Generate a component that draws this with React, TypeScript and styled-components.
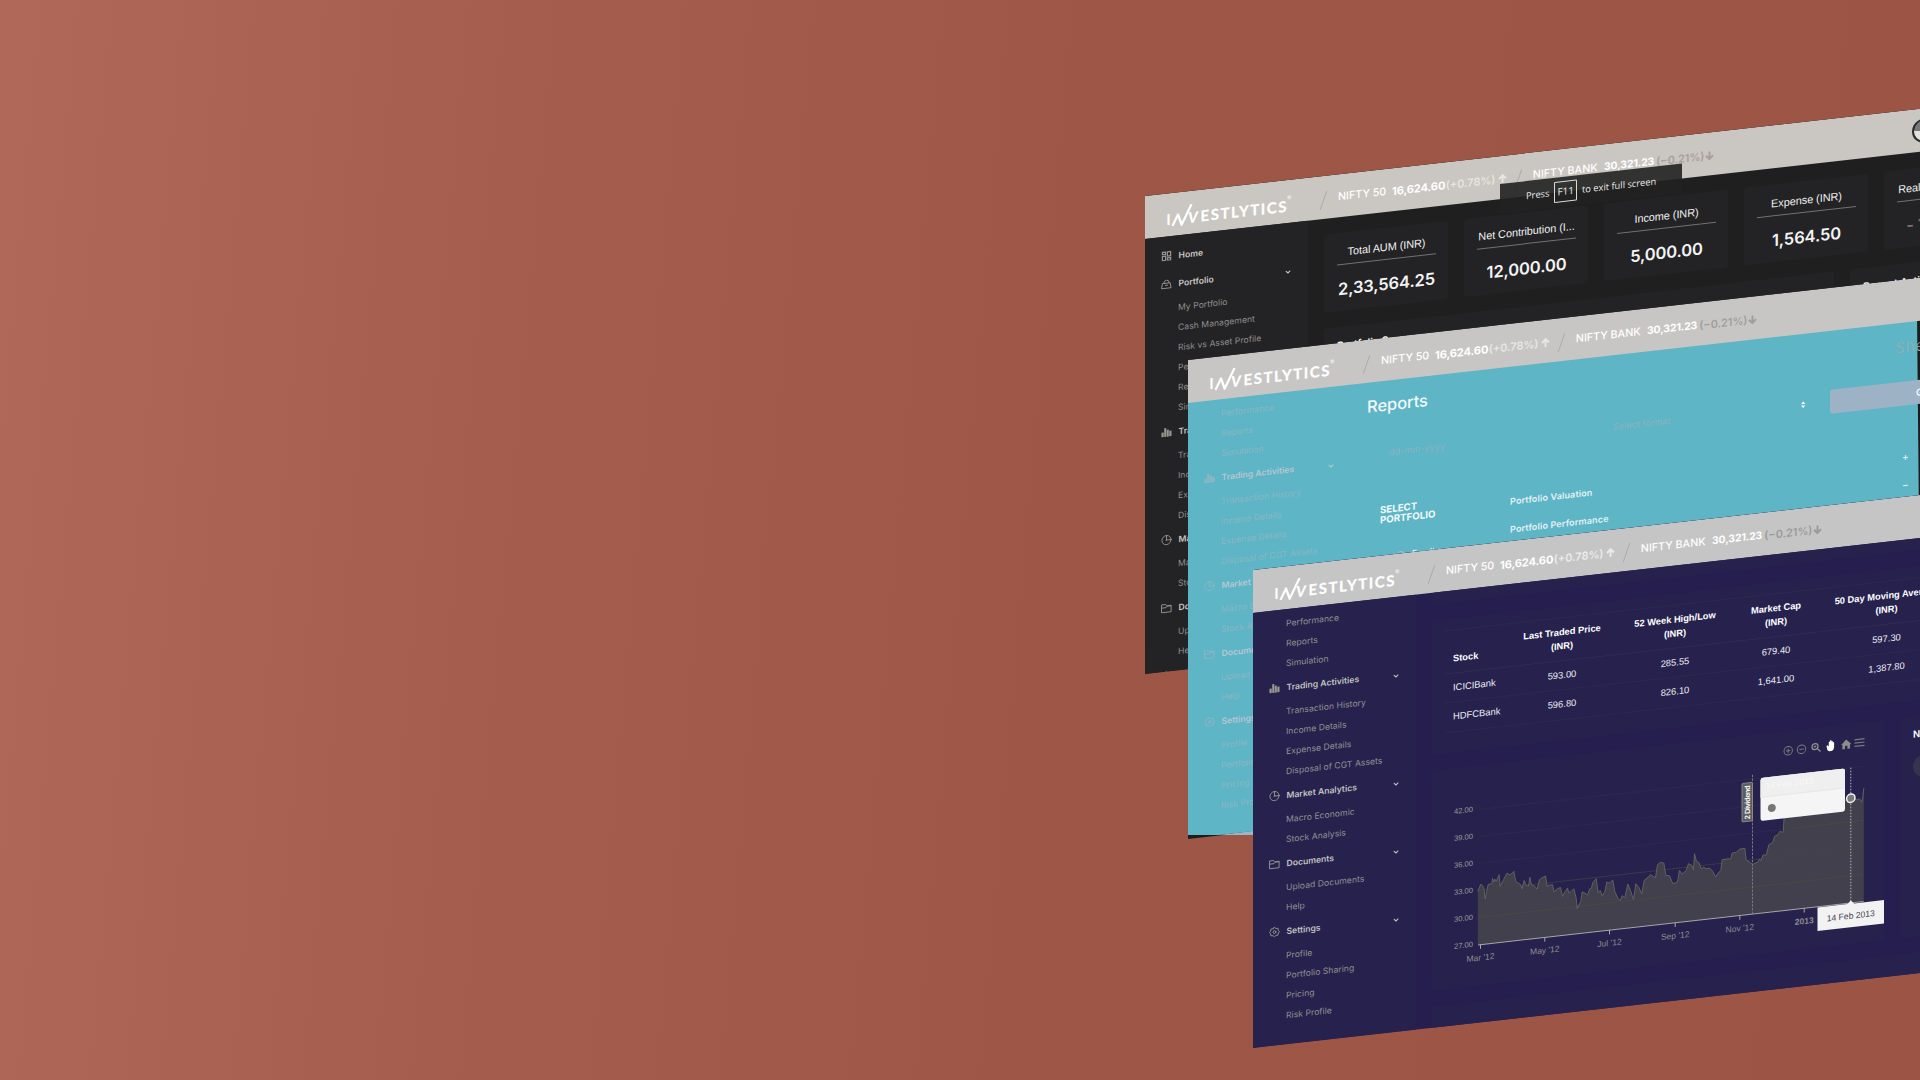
import React from 'react';
import styled, { createGlobalStyle, css } from 'styled-components';

const SLOPE = 0.1125;

type Tone = {
  header: string;
  side: string;
  body: string;
  card: string;
  group: string;
  link: string;
  icon: string;
  up: string;
  down: string;
  slash: string;
};

const dark: Tone = {
  header: '#cac6c1', side: '#232325', body: '#1f1f20', card: '#232325',
  group: '#cbc6c1', link: '#918e8b', icon: '#98948f',
  up: '#e3e7de', down: '#a99f9b', slash: '#aeaaa6',
};
const cyan: Tone = {
  header: '#c8c6c5', side: 'transparent', body: 'transparent', card: 'transparent',
  group: '#b9c6d0', link: '#8cb5c4', icon: '#8fb6c5',
  up: '#e4e8e3', down: '#a19e9d', slash: '#aeacab',
};
const navy: Tone = {
  header: '#c5c5c5', side: '#26224d', body: '#261e4f', card: '#26224d',
  group: '#c3c2c1', link: '#92908f', icon: '#98968f',
  up: '#ebebeb', down: '#9b9b9b', slash: '#ababab',
};

const Global = createGlobalStyle`
  html, body { margin: 0; padding: 0; background: #9d5546; }
  * { box-sizing: border-box; }
`;

const Scene = styled.main`
  position: relative;
  width: 1920px;
  height: 1080px;
  overflow: hidden;
  background: linear-gradient(95deg, #b06858 0%, #a55d4d 26%, #9e5646 56%, #9c5444 100%);
  font-family: Inter, 'Liberation Sans', sans-serif;
  white-space: nowrap;
`;

const Window = styled.section<{ $x: number; $y: number; $tone: Tone }>`
  position: absolute;
  left: ${p => p.$x}px;
  top: ${p => p.$y}px;
  width: 900px;
  height: 478px;
  display: flex;
  flex-direction: column;
  overflow: hidden;
  transform-origin: 0 0;
  transform: matrix(1, -${SLOPE}, 0, 1, 0, 0);
  background: ${p => p.$tone.body};
`;

const Backing = styled.div`
  position: absolute;
  left: 1188.3px;
  top: 360.5px;
  width: 900px;
  height: 478px;
  transform-origin: 0 0;
  transform: matrix(1, -${SLOPE}, 0, 1, 0, 0);
  background: #1c1c1d;
`;

const Wash = styled.div<{ $color: string; $clip: string }>`
  position: absolute;
  inset: 0;
  background: ${p => p.$color};
  clip-path: polygon(${p => p.$clip});
`;

const Header = styled.header<{ $tone: Tone }>`
  flex: none;
  height: 43px;
  display: flex;
  align-items: center;
  padding-left: 18px;
  background: ${p => p.$tone.header};
  color: #fff;
`;

const LogoArt = styled.svg`
  flex: none;
  width: 157px;
  height: 43px;
  overflow: visible;
`;

const Slash = styled.i<{ $tone: Tone; $left?: number }>`
  flex: none;
  width: 1px;
  height: 19px;
  margin: 6px 14px 0 ${p => p.$left ?? 3}px;
  transform: rotate(20deg);
  background: ${p => p.$tone.slash};
`;

const Name = styled.span<{ $w: number }>`
  flex: none;
  width: ${p => p.$w}px;
  font-size: 10.7px;
  font-weight: 500;
`;
const Quote = styled.b<{ $w: number; $size?: number }>`
  flex: none;
  width: ${p => p.$w}px;
  font-size: ${p => p.$size ?? 11.1}px;
  font-weight: 700;
  letter-spacing: -0.1px;
`;
const Change = styled.span<{ $w: number; $c: string }>`
  flex: none;
  width: ${p => p.$w}px;
  font-size: 10.9px;
  font-weight: 600;
  color: ${p => p.$c};
`;
const TickerRow = styled.div`
  display: flex;
  align-items: center;
  height: 43px;
  padding-top: 2px;
`;
const ArrowIcon = styled.svg<{ $flip?: boolean }>`
  width: 9px;
  height: 10px;
  ${p => p.$flip && css`transform: rotate(180deg);`}
`;
const Avatar = styled.div`
  flex: none;
  width: 24px;
  height: 24px;
  margin-left: 198px;
  border-radius: 50%;
  border: 2px solid #2d2d2e;
  background: linear-gradient(#77787a 50%, #e4e2df 50%);
`;

const Body = styled.div`
  flex: 1;
  min-height: 0;
  display: flex;
`;
const Side = styled.nav<{ $tone: Tone; $scrolled: boolean }>`
  flex: none;
  width: 163px;
  overflow: hidden;
  background: ${p => p.$tone.side};
  & > div { margin-top: ${p => (p.$scrolled ? -112.5 : 5.5)}px; }
`;
const GroupRow = styled.div<{ $tone: Tone }>`
  display: flex;
  align-items: center;
  height: 28px;
  padding: 0 17.5px 0 16px;
  font-size: 8.6px;
  font-weight: 600;
  color: ${p => p.$tone.group};
  & > svg { color: ${p => p.$tone.icon}; flex: none; }
  & > span { flex: 1; margin-left: 6.5px; }
  & > svg + span + svg { color: ${p => p.$tone.group}; margin-top: 2px; }
`;
const LinkRow = styled.div<{ $tone: Tone }>`
  display: flex;
  align-items: center;
  height: 20px;
  padding-left: 33px;
  font-size: 8.6px;
  letter-spacing: 0.04px;
  color: ${p => p.$tone.link};
`;

const Content = styled.div`
  flex: 1;
  min-width: 0;
  display: flex;
  flex-direction: column;
  gap: 16px;
  padding: 16px 0 0 16px;
`;
const Row = styled.div`
  display: flex;
  gap: 16px;
`;
const Card = styled.div<{ $tone: Tone; $w?: number; $h: number }>`
  flex: none;
  width: ${p => (p.$w ? `${p.$w}px` : 'auto')};
  height: ${p => p.$h}px;
  border-radius: 3px;
  background: ${p => p.$tone.card};
`;
const StatCard = styled(Card)`
  display: flex;
  flex-direction: column;
  align-items: center;
  padding: 12px 12px 0 13px;
`;
const StatTitle = styled.div`
  width: 100%;
  height: 20px;
  text-align: center;
  border-bottom: 1px solid #75716d;
  font: 10.9px/15px 'Liberation Sans', sans-serif;
  letter-spacing: -0.05px;
  color: #f1f1f1;
`;
const StatValue = styled.div<{ $muted?: boolean }>`
  margin-top: 14px;
  font-size: 16.5px;
  line-height: 20px;
  font-weight: 600;
  letter-spacing: -0.1px;
  color: ${p => (p.$muted ? '#80706c' : '#f3f3f3')};
`;
const PanelTitle = styled.h3`
  margin: 0;
  padding: 11px 13px;
  font-size: 10.3px;
  line-height: 15px;
  font-weight: 600;
  color: #f1f1f1;
`;
const Toast = styled.div`
  position: absolute;
  left: 355px;
  top: 27.5px;
  width: 181.5px;
  height: 30.5px;
  display: flex;
  align-items: center;
  gap: 4.5px;
  padding-left: 26px;
  background: rgba(33, 33, 33, 0.9);
  font: 9.3px 'Open Sans', 'Noto Sans', sans-serif;
  color: #ececec;
`;
const Key = styled.kbd`
  width: 23.5px;
  height: 21px;
  text-align: center;
  border: 1px solid #dadada;
  border-radius: 1px;
  font: inherit;
  font-size: 10px;
  line-height: 19px;
`;

const ReportBody = styled.div`
  flex: 1;
  display: flex;
  flex-direction: column;
  padding-left: 16px;
  color: #f4fafb;
`;
const ReportHead = styled.div`
  display: flex;
  height: 50px;
  padding-bottom: 2px;
  align-items: center;
`;
const ReportTitle = styled.h2`
  flex: none;
  margin: 0;
  width: 528px;
  font-size: 16.4px;
  font-weight: 500;
`;
const Faded = styled.span`
  font-size: 15.5px;
  font-weight: 300;
  letter-spacing: 0.8px;
  color: #96adb2;
`;
const FilterRow = styled.div`
  display: flex;
  align-items: center;
  height: 42px;
`;
const Field = styled.div<{ $w: number; $pad: number }>`
  width: ${p => p.$w}px;
  padding-left: ${p => p.$pad}px;
  font-size: 9.1px;
  font-weight: 400;
  color: #8db3c1;
`;
const Action = styled.button`
  width: 180px;
  height: 24px;
  margin: 0;
  padding: 0 0 0 86px;
  border: 0;
  border-radius: 3px;
  text-align: left;
  background: #9db3c5;
  color: #f4f7fa;
  font: 600 9.5px Inter, sans-serif;
`;
const ReportGrid = styled.div`
  display: flex;
  padding: 28px 0 0 13px;
  font-size: 9px;
`;
const Choose = styled.div`
  width: 130px;
  line-height: 10.4px;
  padding-top: 4px;
  font-size: 9.7px;
  font-weight: 700;
`;
const Option = styled.div`
  display: flex;
  align-items: center;
  height: 28px;
  width: 404px;
  justify-content: space-between;
  font-weight: 600;
  letter-spacing: 0.14px;
  color: #e6f1f4;
  b { width: 12px; font-size: 10px; font-weight: 500; }
`;
const RadioLine = styled.div`
  display: flex;
  align-items: center;
  gap: 8px;
  padding: 25px 0 0 17px;
  i { width: 7px; height: 7px; border: 1px solid #9fc0cc; border-radius: 50%; }
`;

const Table = styled.table`
  margin: 11px 0 0 13px;
  width: 720px;
  border-collapse: collapse;
  table-layout: fixed;
  font-family: 'Liberation Sans', sans-serif;
  color: #eeedf2;
`;
const Th = styled.th<{ $w: number; $left?: boolean }>`
  width: ${p => p.$w}px;
  height: 43px;
  padding: ${p => (p.$left ? '13px 0 0 8px' : '0 1px 0 0')};
  text-align: ${p => (p.$left ? 'left' : 'center')};
  border-top: 1px solid #2b2a51;
  border-bottom: 1px solid #2e2c50;
  font-size: 9.3px;
  line-height: 14px;
  color: #fff;
`;
const Td = styled.td<{ $left?: boolean }>`
  height: 29.3px;
  padding: ${p => (p.$left ? '0 0 2px 8px' : '0 1px 1px 0')};
  text-align: ${p => (p.$left ? 'left' : 'center')};
  border-bottom: 1px solid #2b2a4f;
  font-size: 9.4px;
`;
const ChartArt = styled.svg`
  display: block;
  overflow: visible;
  font-family: 'Liberation Sans', sans-serif;
`;
const SideCard = styled(Card)`
  padding: 12px 13px;
  color: #fff;
  font-size: 9.5px;
  font-weight: 600;
  i { display: block; width: 22px; height: 22px; margin-top: 16px; border-radius: 50%; background: #36334f; }
`;
const FlushTop = styled.div`
  display: flex;
  flex-direction: column;
  gap: 16px;
  margin-top: -16px;
`;

const strokeProps = { fill: 'none', stroke: 'currentColor', strokeWidth: 2, strokeLinejoin: 'round' as const, strokeLinecap: 'round' as const };

const icons: Record<string, React.ReactNode> = {
  home: <g {...strokeProps} strokeWidth={2.6} strokeLinejoin="miter"><path d="M3 3h7v5H3zM14 3h7v9h-7zM3 12h7v9H3zM14 16h7v5h-7z" /></g>,
  bag: <g {...strokeProps}><path d="M4 10h16l2 11H2zM6 10a6 6.500 0 0 1 12 0M9.500 14.500h5" /></g>,
  bars: <path fill="currentColor" d="M1 12h5v10H1zM7 3h4.500v19H7zM12.500 7h4.500v15h-4.500zM18 10h5v12h-5z" />,
  pie: <g {...strokeProps}><circle cx="12" cy="12" r="10" /><path d="M12 2v10h10M12 12l-1 1" /></g>,
  folder: <g {...strokeProps}><path d="M2 4h8l2 3h10v14H2zM2 11h9l3-3h8" /></g>,
  gear: <g {...strokeProps}><path d="M12 1.500l3 3h4.500l1 4.500 2 3-2 3-1 4.500H15l-3 3-3-3H4.500l-1-4.500-2-3 2-3 1-4.500H9z" /><circle cx="12" cy="12" r="3" /></g>,
};

const Icon = ({ name }: { name: string }) => (
  <svg width="11" height="11" viewBox="0 0 24 24">{icons[name]}</svg>
);
const Chevron = () => (
  <svg width="6" height="6" viewBox="0 0 6 6"><path d="M.8 2l2.200 2L5.200 2" fill="none" stroke="currentColor" strokeWidth="1.100" /></svg>
);

const menu: { title: string; icon: string; items: string[] }[] = [
  { title: 'Home', icon: 'home', items: [] },
  { title: 'Portfolio', icon: 'bag', items: ['My Portfolio', 'Cash Management', 'Risk vs Asset Profile', 'Performance', 'Reports', 'Simulation'] },
  { title: 'Trading Activities', icon: 'bars', items: ['Transaction History', 'Income Details', 'Expense Details', 'Disposal of CGT Assets'] },
  { title: 'Market Analytics', icon: 'pie', items: ['Macro Economic', 'Stock Analysis'] },
  { title: 'Documents', icon: 'folder', items: ['Upload Documents', 'Help'] },
  { title: 'Settings', icon: 'gear', items: ['Profile', 'Portfolio Sharing', 'Pricing', 'Risk Profile'] },
];

const Sidebar = ({ tone, scrolled = true }: { tone: Tone; scrolled?: boolean }) => (
  <Side $tone={tone} $scrolled={scrolled}>
    <div>
      {menu.map(g => (
        <React.Fragment key={g.title}>
          <GroupRow $tone={tone}>
            <Icon name={g.icon} />
            <span>{g.title}</span>
            {g.items.length > 0 && <Chevron />}
          </GroupRow>
          {g.items.map(i => <LinkRow $tone={tone} key={i}>{i}</LinkRow>)}
        </React.Fragment>
      ))}
    </div>
  </Side>
);

const Logo = () => (
  <LogoArt viewBox="18 0.6 157 43" fill="#fff" fontFamily="Lato, sans-serif" fontWeight="700">
    <text x="21.300" y="32.300" fontSize="15">I</text>
    <path d="M27.500 33.500L33 22.800l3.700 10.600L46.500 14" fill="none" stroke="#fff" strokeWidth="2.300" strokeLinejoin="round" />
    <text x="43" y="32.600" fontSize="15" fontStyle="italic" fontWeight="900">V</text>
    <text x="55.500" y="32.300" fontSize="15" textLength="86" lengthAdjust="spacing" stroke="#fff" strokeWidth=".25">ESTLYTICS</text>
    <text x="142" y="20" fontSize="5.500" opacity=".8">®</text>
  </LogoArt>
);

const Arrow = ({ color, flip }: { color: string; flip?: boolean }) => (
  <ArrowIcon $flip={flip} viewBox="0 0 9 10"><path d="M4.500 9V1.500M1 5l3.500-3.500L8 5" fill="none" stroke={color} strokeWidth="2" /></ArrowIcon>
);

const TopBar = ({ tone, avatar }: { tone: Tone; avatar?: boolean }) => (
  <Header $tone={tone}>
    <Logo />
    <Slash $tone={tone} />
    <TickerRow>
      <Name $w={54}>NIFTY 50</Name>
      <Quote $w={53.8}>16,624.60</Quote>
      <Change $w={52}  $c={tone.up}>(+0.78%)</Change>
      <Arrow color={tone.up} />
    </TickerRow>
    <Slash $tone={tone} $left={11} />
    <TickerRow>
      <Name $w={71.2}>NIFTY BANK</Name>
      <Quote $w={52.3} $size={10.4}>30,321.23</Quote>
      <Change $w={48.5} $c={tone.down}>(−0.21%)</Change>
      <Arrow color={tone.down} flip />
    </TickerRow>
    {avatar && <Avatar />}
  </Header>
);

const stats = [
  ['Total AUM (INR)', '2,33,564.25'],
  ['Net Contribution (I...', '12,000.00'],
  ['Income (INR)', '5,000.00'],
  ['Expense (INR)', '1,564.50'],
  ['Realised Gain (INR)', '- 1,245.00'],
];

const rows = [
  ['ICICIBank', '593.00', '285.55', '679.40', '597.30', ''],
  ['HDFCBank', '596.80', '826.10', '1,641.00', '1,387.80', ''],
];

/* Price samples in thirds of a pixel, measured along the tilted plane. */
const samples: number[][] = [
  [235,455],[239,445],[244,433],[253,443],[257,478],[266,434],[277,432],[279,416],[283,427],[286,418],[290,425],[299,405],[302,440],[312,420],[322,401],[333,405],[343,395],[349,426],[362,433],[368,447],[374,422],[380,437],[387,440],[391,413],[396,435],[405,439],[413,448],[420,420],[428,414],[438,409],[443,440],[450,436],[459,435],[464,457],[472,448],[483,443],[489,470],[497,455],[504,445],[508,460],[515,455],[523,447],[530,475],[533,507],[541,490],[544,485],[548,456],[556,460],[564,466],[571,447],[576,445],[580,428],[590,417],[596,460],[602,452],[608,468],[616,456],[622,427],[630,430],[640,421],[646,456],[655,475],[662,483],[668,468],[676,474],[685,433],[693,452],[702,480],[709,432],[718,443],
  [727,462],[734,422],[746,412],[753,405],[768,414],[774,375],[782,368],[793,370],[799,407],[810,408],[820,432],[834,427],[840,392],[848,403],[860,392],[867,372],[876,376],[882,390],[885,342],[891,365],[898,368],[906,388],[912,382],[920,387],[930,385],[940,395],[948,412],[956,400],[964,392],[968,360],[980,358],[994,357],[998,340],[1010,338],[1021,328],[1036,326],[1040,360],[1059,374],[1076,366],[1080,358],[1084,363],[1091,345],[1100,347],[1108,315],[1120,308],[1125,290],[1135,285],[1141,275],[1151,278],[1154,230],[1160,210],[1180,205],[1198,225],[1202,233],[1210,210],[1250,202],[1280,195],[1320,185],[1345,180],[1350,167],[1360,173],[1370,180],[1380,177],[1387,187],[1390,172],[1393,145],
];
/* Chart card origin inside the window is (179.5, 221). */
const line = samples
  .map(([x, y]) => `${(147 + x / 3 - 179.5).toFixed(2)},${(186.2 + y / 3 + 0.0375 * x - 221).toFixed(2)}`)
  .join(' ');

const months: [string, number][] = [["Mar '12", 48.5], ["May '12", 112.8], ["Jul '12", 177.5], ["Sep '12", 243.2], ["Nov '12", 307.8], ['2013', 372.2]];

const Chart = () => (
  <ChartArt width="452" height="220" viewBox="0 0 452 220">
    {[0, 1, 2, 3, 4].map(i => <path key={i} d={`M47 ${44 + i * 27}H431.500`} stroke="#2c2a50" />)}
    <polygon points={`${line} 431.8,179 45.800,179`} fill="#41404c" />
    {[2, 3, 4].map(i => <path key={i} d={`M${i === 2 ? 392 : 47} ${44 + i * 27}H431.500`} stroke="#494942" strokeOpacity={i === 3 ? 0.5 : 0.9} />)}
    <path d="M360 98H431.500" stroke="#494942" />
    <polyline points={line} fill="none" stroke="#66655f" strokeWidth=".9" />
    <path d="M46 179.300H431.500" stroke="#a8a7ab" />
    {months.map(([m, x]) => (
      <g key={m}>
        <path d={`M${x} 179v4.500`} stroke="#a8a7ab" />
        <text x={x} y="195" textAnchor="middle" fontSize="8.500" fontWeight={m === '2013' ? 700 : 400} fill="#8e8c8e">{m}</text>
      </g>
    ))}
    {[42, 39, 36, 33, 30, 27].map((v, i) => (
      <text key={v} x="41" y={45.6 + i * 27} textAnchor="end" fontSize="7.600" fill="#9c9a98">{v}.00</text>
    ))}

    <g fill="none" stroke="#7c7a7b" strokeWidth="1">
      <circle cx="356.200" cy="20" r="4.200" /><path d="M354 20h4.400M356.200 17.800v4.400" />
      <circle cx="369.500" cy="20" r="4.200" /><path d="M367.300 20h4.400" />
    </g>
    <g fill="none" stroke="#93918f" strokeWidth="1.200">
      <circle cx="383" cy="18.800" r="3" /><path d="M385.200 21l3.300 3.300" /><path d="M381.700 18.800h2.600M383 17.500v2.600" strokeWidth=".8" />
    </g>
    <path d="M394.500 19.500l1.300-.5 1 1.200v-4.500q.7-.9 1.300 0v-1.200q.7-.9 1.400 0v1q.7-.8 1.300 0v1.200q.8-.7 1.300.2v4.600q-.3 3.200-2.700 3.500h-2.200q-1.400-.4-2-2z" fill="#fff" />
    <path d="M409 20.300l5.200-5 5.200 5H418v4.400h-2.600v-3h-2.400v3h-2.600v-4.400z" fill="#8e8c89" />
    <path d="M422.500 16.500h10M422.500 19.800h10M422.500 23.100h10" stroke="#7c7a7b" strokeWidth="1.200" />

    <path d="M320.500 40V179" stroke="#77767a" strokeDasharray="2.500 1.200" />
    <rect x="310" y="47.500" width="10.500" height="38.500" rx="1" fill="#5d5c60" stroke="#96958f" strokeWidth=".8" />
    <text transform="translate(318 84) rotate(-90)" fontSize="7.600" fontWeight="700" fill="#f3f3f3" textLength="34">2 Dividend</text>

    <path d="M418.800 44V179" stroke="#b9b8bc" strokeDasharray="1.500 1.500" />
    <rect x="328.500" y="44" width="84.500" height="43" rx="2.500" fill="#f5f5f5" />
    <path d="M331 44h79.500q2.500 0 2.500 2.500V63.500H328.500V46.500q0-2.500 2.500-2.500z" fill="#efefef" />
    <path d="M328.500 63.500H413" stroke="#e4e4e4" strokeWidth=".8" />
    <text x="333.500" y="55.500" fontSize="8.600" fill="#f8f8f8">14 Feb 2013</text>
    <circle cx="339.800" cy="75.300" r="4" fill="#777" />
    <circle cx="418.800" cy="74.500" r="4.200" fill="#7a7a7a" stroke="#f2f2f2" strokeWidth="1.500" />
    <path d="M385.500 180h30l3.300-3.300 3.300 3.300H452v23.500h-66.500z" fill="#f2f2f3" />
    <text x="418.800" y="195" fontSize="8.600" textAnchor="middle" fill="#45444f">14 Feb 2013</text>
  </ChartArt>
);

const Dashboard = () => (
  <Window $x={1145.3} $y={196.3} $tone={dark}>
    <TopBar tone={dark} avatar />
    <Body>
      <Sidebar tone={dark} scrolled={false} />
      <Content>
        <Row>
          {stats.map(([t, v], i) => (
            <StatCard key={t} $tone={dark} $w={124} $h={78}>
              <StatTitle>{t}</StatTitle>
              <StatValue $muted={i === 4}>{v}</StatValue>
            </StatCard>
          ))}
        </Row>
        <Row>
          <Card $tone={dark} $w={510} $h={300}><PanelTitle>Portfolio Summary</PanelTitle></Card>
          <Card $tone={dark} $w={300} $h={300}><PanelTitle>Recent Activities</PanelTitle></Card>
        </Row>
      </Content>
    </Body>
    <Toast>Press <Key>F11</Key> to exit full screen</Toast>
  </Window>
);

const Reports = () => (
  <>
    <Backing />
    <Wash $color="#9fb4c6" $clip="1219px 835px, 1256px 830.5px, 1256px 835px" />
    <Wash $color="#5db5c6" $clip="1188px 398px, 1917px 314px, 1919px 520px, 1919px 756px, 1219px 835px, 1188px 835px" />
    <Window $x={1188.3} $y={360.3} $tone={cyan}>
      <TopBar tone={cyan} />
      <Body>
        <Sidebar tone={cyan} />
        <ReportBody>
          <ReportHead><ReportTitle>Reports</ReportTitle><Faded>She</Faded></ReportHead>
          <FilterRow>
            <Field $w={224} $pad={22}>dd-mm-yyyy</Field>
            <Field $w={209} $pad={22}>Select format</Field>
            <svg width="30" height="8" viewBox="0 0 30 8"><path d="M1 3.300L3.200.8l2.200 2.500zM1 4.800l2.200 2.500 2.200-2.500z" fill="#fff" /></svg>
            <Action>Generate</Action>
          </FilterRow>
          <ReportGrid>
            <div>
              <Choose>SELECT<br />PORTFOLIO</Choose>
              <RadioLine><i />Family</RadioLine>
            </div>
            <div>
              <Option>Portfolio Valuation<b>+</b></Option>
              <Option>Portfolio Performance<b>−</b></Option>
            </div>
          </ReportGrid>
        </ReportBody>
      </Body>
    </Window>
  </>
);

const Analytics = () => (
  <Window $x={1253} $y={570.3} $tone={navy}>
    <TopBar tone={navy} />
    <Body>
      <Sidebar tone={navy} />
      <Content>
        <FlushTop>
          <Card $tone={navy} $h={12} />
          <Card $tone={navy} $h={134}>
            <Table>
              <thead>
                <tr>
                  <Th $w={62} $left>Stock</Th>
                  <Th $w={111}>Last Traded Price<br />(INR)</Th>
                  <Th $w={115}>52 Week High/Low<br />(INR)</Th>
                  <Th $w={87}>Market Cap<br />(INR)</Th>
                  <Th $w={134}>50 Day Moving Average<br />(INR)</Th>
                  <Th $w={211} />
                </tr>
              </thead>
              <tbody>
                {rows.map(r => (
                  <tr key={r[0]}>{r.map((c, i) => <Td key={i} $left={i === 0}>{c}</Td>)}</tr>
                ))}
              </tbody>
            </Table>
          </Card>
          <Row>
            <Card $tone={navy} $w={452} $h={220}><Chart /></Card>
            <SideCard $tone={navy} $w={240} $h={220}>News<i /></SideCard>
          </Row>
          <Card $tone={navy} $h={60} />
        </FlushTop>
      </Content>
    </Body>
  </Window>
);

export default function App() {
  return (
    <Scene>
      <Global />
      <Dashboard />
      <Reports />
      <Analytics />
    </Scene>
  );
}
